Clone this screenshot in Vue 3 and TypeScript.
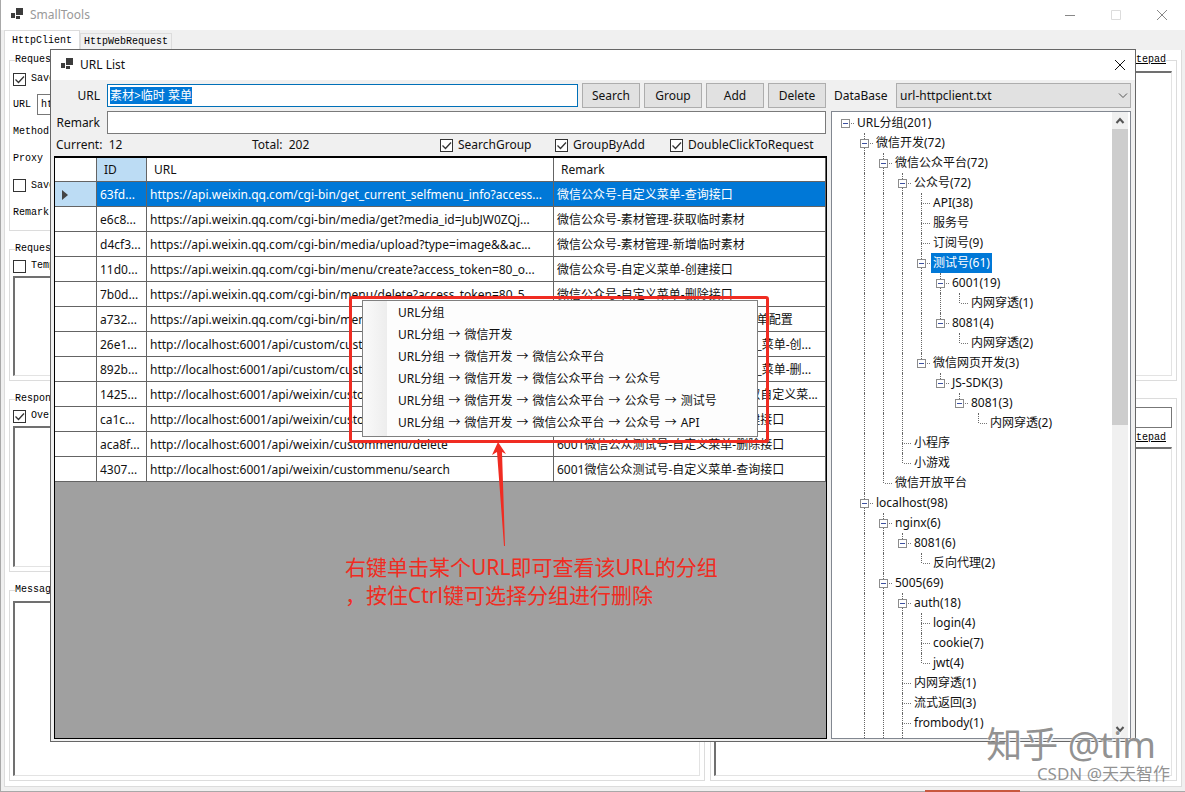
<script setup lang="ts">
import { ref } from 'vue'

interface UrlRow {
  id: string
  url: string
  remark: string
}

interface TreeNode {
  depth: number
  label: string
}

const rows: UrlRow[] = [
  { id: '63fd...', url: 'https://api.weixin.qq.com/cgi-bin/get_current_selfmenu_info?access...', remark: '微信公众号-自定义菜单-查询接口' },
  { id: 'e6c8...', url: 'https://api.weixin.qq.com/cgi-bin/media/get?media_id=JubJW0ZQj...', remark: '微信公众号-素材管理-获取临时素材' },
  { id: 'd4cf3...', url: 'https://api.weixin.qq.com/cgi-bin/media/upload?type=image&&ac...', remark: '微信公众号-素材管理-新增临时素材' },
  { id: '11d0...', url: 'https://api.weixin.qq.com/cgi-bin/menu/create?access_token=80_o...', remark: '微信公众号-自定义菜单-创建接口' },
  { id: '7b0d...', url: 'https://api.weixin.qq.com/cgi-bin/menu/delete?access_token=80_5...', remark: '微信公众号-自定义菜单-删除接口' },
  { id: 'a732...', url: 'https://api.weixin.qq.com/cgi-bin/menu', remark: '微信公众号-自定义菜单-获取自定义菜单配置' },
  { id: '26e1...', url: 'http://localhost:6001/api/custom/custom', remark: '6001微信公众测试号-通用接口自定义_菜单-创...' },
  { id: '892b...', url: 'http://localhost:6001/api/custom/custom', remark: '6001微信公众测试号-通用接口自定义_菜单-删...' },
  { id: '1425...', url: 'http://localhost:6001/api/weixin/custom', remark: '6001微信公众测试号-个性化菜单-获取自定义菜...' },
  { id: 'ca1c...', url: 'http://localhost:6001/api/weixin/custom', remark: '6001微信公众测试号-自定义菜单-创建接口' },
  { id: 'aca8f...', url: 'http://localhost:6001/api/weixin/custommenu/delete', remark: '6001微信公众测试号-自定义菜单-删除接口' },
  { id: '4307...', url: 'http://localhost:6001/api/weixin/custommenu/search', remark: '6001微信公众测试号-自定义菜单-查询接口' },
]

const nodes: TreeNode[] = [
  { depth: 0, label: 'URL分组(201)' },
  { depth: 1, label: '微信开发(72)' },
  { depth: 2, label: '微信公众平台(72)' },
  { depth: 3, label: '公众号(72)' },
  { depth: 4, label: 'API(38)' },
  { depth: 4, label: '服务号' },
  { depth: 4, label: '订阅号(9)' },
  { depth: 4, label: '测试号(61)' },
  { depth: 5, label: '6001(19)' },
  { depth: 6, label: '内网穿透(1)' },
  { depth: 5, label: '8081(4)' },
  { depth: 6, label: '内网穿透(2)' },
  { depth: 4, label: '微信网页开发(3)' },
  { depth: 5, label: 'JS-SDK(3)' },
  { depth: 6, label: '8081(3)' },
  { depth: 7, label: '内网穿透(2)' },
  { depth: 3, label: '小程序' },
  { depth: 3, label: '小游戏' },
  { depth: 2, label: '微信开放平台' },
  { depth: 1, label: 'localhost(98)' },
  { depth: 2, label: 'nginx(6)' },
  { depth: 3, label: '8081(6)' },
  { depth: 4, label: '反向代理(2)' },
  { depth: 2, label: '5005(69)' },
  { depth: 3, label: 'auth(18)' },
  { depth: 4, label: 'login(4)' },
  { depth: 4, label: 'cookie(7)' },
  { depth: 4, label: 'jwt(4)' },
  { depth: 3, label: '内网穿透(1)' },
  { depth: 3, label: '流式返回(3)' },
  { depth: 3, label: 'frombody(1)' },
]

// Levels whose branches carry on below the visible part of the list.
const openLevels = [1, 2, 3]

function continues(index: number, level: number): boolean {
  for (let j = index + 1; j < nodes.length; j++) {
    if (nodes[j].depth < level) return false
    if (nodes[j].depth === level) return true
  }
  return openLevels.includes(level)
}

const treeRows = nodes.map((node, i) => ({
  ...node,
  parent: i + 1 < nodes.length && nodes[i + 1].depth > node.depth,
  guides: Array.from({ length: node.depth }, (_, level) => continues(i, level)),
  more: continues(i, node.depth),
}))

const selectedNode = ref(7)
const selectedRow = ref(0)

const menuItems: string[][] = [
  ['URL分组'],
  ['URL分组', '微信开发'],
  ['URL分组', '微信开发', '微信公众平台'],
  ['URL分组', '微信开发', '微信公众平台', '公众号'],
  ['URL分组', '微信开发', '微信公众平台', '公众号', '测试号'],
  ['URL分组', '微信开发', '微信公众平台', '公众号', 'API'],
]

const buttons = ['Search', 'Group', 'Add', 'Delete']
const options = ref([
  { label: 'SearchGroup', on: true },
  { label: 'GroupByAdd', on: true },
  { label: 'DoubleClickToRequest', on: true },
])
const keyword = ref('素材>临时 菜单')
const remark = ref('')
</script>

<template>
  <div class="desktop">
    <main class="app-window">
      <header class="app-title">
        <svg class="logo" width="14" height="14" viewBox="0 0 14 14">
          <path d="M6 0h7v7H6zM1 5h4v5H1zM6 8h4v3H6z" fill="#3c3c3c" />
        </svg>
        <h1>SmallTools</h1>
        <div class="controls">
          <button type="button" aria-label="Minimize">
            <svg width="12" height="12"><path d="M1 6.500h10" stroke="#888" /></svg>
          </button>
          <button type="button" aria-label="Maximize">
            <svg width="12" height="12"><path d="M1.500 1.500h9v9h-9z" fill="none" stroke="#dcdcdc" /></svg>
          </button>
          <button type="button" aria-label="Close">
            <svg width="12" height="12"><path d="M1 1l10 10M11 1L1 11" stroke="#888" /></svg>
          </button>
        </div>
      </header>

      <nav class="tabs">
        <button type="button" class="tab active">HttpClient</button>
        <button type="button" class="tab">HttpWebRequest</button>
      </nav>

      <section class="page">
        <div class="column left">
          <fieldset class="g-request">
            <legend>Request</legend>
            <label class="line"><input type="checkbox" checked />Save</label>
            <label class="line">URL<input type="text" class="old-input" value="http" /></label>
            <div class="line">Method</div>
            <div class="line">Proxy</div>
            <label class="line"><input type="checkbox" />Save</label>
            <div class="line">Remark</div>
          </fieldset>
          <fieldset class="g-params">
            <legend>Request</legend>
            <label class="line"><input type="checkbox" />Template</label>
            <textarea aria-label="Request body"></textarea>
          </fieldset>
          <fieldset class="g-response">
            <legend>Response</legend>
            <label class="line"><input type="checkbox" checked />Overwrite</label>
            <textarea aria-label="Response body"></textarea>
          </fieldset>
          <fieldset class="g-message">
            <legend>Message</legend>
            <textarea aria-label="Messages"></textarea>
          </fieldset>
        </div>
        <div class="column right">
          <fieldset class="g-top">
            <legend class="end"><a href="#">Notepad</a></legend>
            <textarea aria-label="Headers"></textarea>
          </fieldset>
          <fieldset class="g-bottom">
            <input type="text" class="old-input" aria-label="Filter" />
            <a href="#">Notepad</a>
            <textarea aria-label="Output"></textarea>
          </fieldset>
        </div>
      </section>
      <div class="taskbar"><i></i></div>
    </main>

    <section class="dialog">
      <header class="dialog-title">
        <svg class="logo" width="14" height="14" viewBox="0 0 14 14">
          <path d="M6 0h7v7H6zM1 5h4v5H1zM6 8h4v3H6z" fill="#3c3c3c" />
        </svg>
        <h2>URL List</h2>
        <button type="button" aria-label="Close">
          <svg width="12" height="12"><path d="M1 1l10 10M11 1L1 11" stroke="#111" /></svg>
        </button>
      </header>

      <div class="dialog-body">
        <div class="main-pane">
          <div class="form-row">
            <label for="url">URL</label>
            <div class="field focused">
              <input id="url" v-model="keyword" type="text" class="keyword" />
            </div>
            <div class="buttons">
              <button v-for="b in buttons" :key="b" type="button">{{ b }}</button>
            </div>
          </div>
          <div class="form-row second">
            <label for="remark">Remark</label>
            <input id="remark" v-model="remark" class="field" type="text" />
          </div>
          <div class="status">
            <span class="current">Current:&nbsp; 12</span>
            <span class="total">Total:&nbsp; 202</span>
            <label v-for="o in options" :key="o.label"><input v-model="o.on" type="checkbox" />{{ o.label }}</label>
          </div>
          <div class="grid">
            <table>
              <colgroup><col class="c-head" /><col class="c-id" /><col class="c-url" /><col /></colgroup>
              <thead>
                <tr><th></th><th class="hot">ID</th><th>URL</th><th>Remark</th></tr>
              </thead>
              <tbody>
                <tr v-for="(r, i) in rows" :key="r.id" :class="{ selected: i === selectedRow }" @click="selectedRow = i">
                  <td class="row-head">
                    <svg v-if="i === selectedRow" width="6" height="10"><path d="M0 0l6 5-6 5z" fill="#444" /></svg>
                  </td>
                  <td>{{ r.id }}</td>
                  <td>{{ r.url }}</td>
                  <td>{{ r.remark }}</td>
                </tr>
              </tbody>
            </table>
          </div>
        </div>

        <aside class="side-pane">
          <div class="database">
            <label for="db">DataBase</label>
            <div class="select">
              <select id="db"><option>url-httpclient.txt</option></select>
              <svg width="10" height="6"><path d="M1 .5l4 4 4-4" fill="none" stroke="#555" /></svg>
            </div>
          </div>
          <div class="tree">
            <ul>
              <li v-for="(n, i) in treeRows" :key="i">
                <span v-for="(g, l) in n.guides" :key="l" class="cell" :class="{ through: g && l > 0 }"></span>
                <span class="cell own" :class="{ up: n.depth > 0, down: n.more && n.depth > 0 }">
                  <button v-if="n.parent" type="button" class="expander" aria-label="Toggle"></button>
                </span>
                <button type="button" class="node" :class="{ chosen: i === selectedNode }" @click="selectedNode = i">{{ n.label }}</button>
              </li>
              <li class="rest">
                <span class="cell"></span>
                <span v-for="l in openLevels" :key="l" class="cell through"></span>
              </li>
            </ul>
            <div class="scrollbar">
              <svg width="16" height="17"><path d="M4.500 11l3.500-4 3.500 4" fill="none" stroke="#555" stroke-width="2" /></svg>
              <div class="track"><div class="thumb"></div></div>
              <svg width="16" height="17"><path d="M4.500 6l3.500 4 3.500-4" fill="none" stroke="#555" stroke-width="2" /></svg>
            </div>
          </div>
        </aside>
      </div>

      <div class="context">
        <div class="context-menu" role="menu">
          <button v-for="(m, i) in menuItems" :key="i" type="button" role="menuitem">
            <template v-for="(part, k) in m" :key="k"><span v-if="k > 0" class="sep">→</span>{{ part }}</template>
          </button>
        </div>
      </div>
      <svg class="arrow" width="18" height="104" viewBox="0 0 18 104">
        <path d="M7 0L1 13l5-3 7 94 1-0L11 10l4 2z" fill="#f02c22" />
      </svg>
      <p class="note">右键单击某个URL即可查看该URL的分组<br />，按住Ctrl键可选择分组进行删除</p>
    </section>

    <div class="marks">
      <span class="mark-large">知乎 @tim</span>
      <span class="mark-small">CSDN @天天智作</span>
    </div>
  </div>
</template>

<style>
body {
  margin: 0;
  overflow: hidden;
}
</style>

<style scoped>
* {
  box-sizing: border-box;
}
.desktop {
  position: relative;
  height: 100vh;
  overflow: hidden;
  background: #f0f0f0;
  color: #111;
  font: 12px/20px "Noto Sans", "Noto Sans CJK SC", sans-serif;
}
button,
input,
select,
textarea {
  font: inherit;
  color: inherit;
  padding: 0;
  margin: 0;
  border-radius: 0;
}
button {
  border: 0;
  background: none;
}
h1,
h2 {
  margin: 0;
  font: inherit;
}
input[type="checkbox"] {
  appearance: none;
  width: 13px;
  height: 13px;
  margin: 0 5px 0 0;
  border: 1px solid #333;
  background: #fff;
  flex: none;
}
input[type="checkbox"]:checked {
  background: #fff url("data:image/svg+xml,%3Csvg xmlns='http://www.w3.org/2000/svg' viewBox='0 0 11 11'%3E%3Cpath d='M1.500 5.500l3 3 5.500-6' fill='none' stroke='%23333' stroke-width='1.300'/%3E%3C/svg%3E");
}

/* Main window */
.app-window {
  display: flex;
  flex-direction: column;
  height: 100%;
  border-left: 1px solid #a8a8a8;
}
.app-title {
  display: flex;
  align-items: center;
  height: 30px;
  flex: none;
  padding-left: 9px;
  background: #fff;
  color: #999;
}
.app-title h1 {
  flex: 1;
  margin-left: 6px;
}
.controls {
  display: flex;
}
.controls button {
  width: 46px;
  height: 28px;
  display: grid;
  place-items: center;
}
.tabs {
  display: flex;
  align-items: flex-end;
  height: 20px;
  flex: none;
  padding-left: 3px;
  font: 10px/16px "Liberation Mono", monospace;
  color: #000;
}
.tab {
  height: 17px;
  padding: 0 3px;
  border: 1px solid #dcdcdc;
  border-bottom: 0;
  background: #f0f0f0;
}
.tab.active {
  height: 20px;
  padding: 0 7px;
  background: #fff;
}
.page {
  flex: 1;
  min-height: 0;
  display: grid;
  grid-template-columns: 149fr 100fr;
  gap: 5px;
  margin: 0 3px;
  padding: 3px 4px 5px;
  border: 1px solid #dcdcdc;
  border-top: 0;
  background: #fff;
  font: 10px/14px "Liberation Mono", monospace;
  color: #000;
}
.column {
  display: flex;
  flex-direction: column;
  gap: 11px;
  min-height: 0;
}
fieldset {
  display: flex;
  flex-direction: column;
  margin: 0;
  min-width: 0;
  min-height: 0;
  padding: 0 4px 4px 3px;
  border: 1px solid #dcdcdc;
}
legend {
  margin-left: 2px;
  padding: 0;
  line-height: 14px;
}
legend.end {
  margin-left: auto;
  margin-right: 6px;
}
.g-request {
  flex: 0 0 178px;
}
.g-params {
  flex: 0 0 139px;
}
.g-response {
  flex: 0 0 180px;
}
.g-message {
  flex: 1;
}
.g-top {
  flex: 0 0 328px;
}
.g-bottom {
  flex: 1;
  margin-top: 6px;
  padding-top: 8px;
}
.line {
  display: flex;
  align-items: center;
  height: 27px;
  flex: none;
}
.g-request legend + .line {
  height: 24px;
}
.g-params .line,
.g-response .line {
  height: 20px;
}
.g-message legend,
.g-top legend {
  margin-bottom: 4px;
}
.line .old-input {
  margin-left: 6px;
  width: 200px;
}
.old-input {
  height: 21px;
  flex: none;
  padding: 0 3px;
  border: 1px solid #777;
  background: #fff;
}
.g-bottom a {
  align-self: flex-end;
  margin: 3px 6px 2px 0;
}
.page a {
  color: #000;
}
textarea {
  flex: 1;
  min-height: 0;
  width: 100%;
  resize: none;
  border: 1px solid #e3e3e3;
  border-top: 2px solid #707070;
  border-left: 2px solid #707070;
  background: #fff;
}
.taskbar {
  display: flex;
  height: 5px;
  flex: none;
  border-bottom: 1px solid #a8a8a8;
}
.taskbar i {
  width: 95px;
  height: 2px;
  margin: 3px 0 0 78%;
  background: #c8573e;
}

/* Dialog */
.dialog {
  position: absolute;
  inset: 49px 49px 50px 50px;
  display: flex;
  flex-direction: column;
  border: 1px solid #666;
  background: #f0f0f0;
}
.dialog-title {
  display: flex;
  align-items: center;
  height: 30px;
  flex: none;
  padding: 0 9px;
  background: #fff;
}
.dialog-title h2 {
  flex: 1;
  margin-left: 6px;
}
.dialog-title button {
  display: grid;
}
.dialog-body {
  flex: 1;
  min-height: 0;
  display: flex;
  gap: 4px;
  padding: 3px 4px 2px 3px;
}
.main-pane {
  flex: 1;
  min-width: 0;
  display: flex;
  flex-direction: column;
}
.form-row {
  display: flex;
  align-items: center;
  height: 25px;
  flex: none;
}
.form-row.second {
  margin: 2px 1px 0 0;
}
.form-row > label {
  width: 53px;
  padding-right: 7px;
  flex: none;
  text-align: right;
}
.field {
  flex: 1;
  min-width: 0;
  height: 23px;
  padding: 1px;
  border: 1px solid #7a7a7a;
  background: #fff;
}
.field.focused {
  display: flex;
  align-items: center;
  border-color: #0070b8;
}
.keyword {
  field-sizing: content;
  height: 17px;
  margin-left: 1px;
  border: 0;
  outline: 0;
  background: #0078d7;
  color: #fff;
  line-height: 17px;
}
.buttons {
  display: flex;
  gap: 4px;
  padding: 0 1px 0 4px;
}
.buttons button {
  width: 58px;
  height: 25px;
  border: 1px solid #adadad;
  background: #e1e1e1;
}
.status {
  display: flex;
  align-items: center;
  height: 20px;
  flex: none;
  padding: 0 7px 0 2px;
}
.status label {
  display: flex;
  align-items: center;
  width: 115px;
}
.status label:last-child {
  width: 150px;
}
.current {
  width: 196px;
}
.total {
  flex: 1;
}
.grid {
  flex: 1;
  min-height: 0;
  margin-top: 1px;
  overflow: hidden;
  border: 1px solid #000;
  border-top-width: 2px;
  background: #a0a0a0;
}
table {
  width: 100%;
  table-layout: fixed;
  border-collapse: separate;
  border-spacing: 0;
}
.c-head {
  width: 42px;
}
.c-id {
  width: 50px;
}
.c-url {
  width: 407px;
}
th,
td {
  height: 25px;
  padding: 2px 3px 0;
  border-right: 1px solid #646464;
  border-bottom: 1px solid #646464;
  background: #fff;
  font-weight: normal;
  text-align: left;
  white-space: nowrap;
  overflow: hidden;
}
th {
  height: 24px;
  padding: 0 7px;
}
th.hot {
  background: #bcdcf4;
}
.selected td {
  background: #0078d7;
  color: #fff;
}
.selected .row-head {
  background: #bcdcf4;
}
.row-head {
  padding: 2px 7px 0;
}
.row-head svg {
  display: block;
}

/* Tree */
.side-pane {
  width: 300px;
  flex: none;
  display: flex;
  flex-direction: column;
}
.database {
  display: flex;
  align-items: center;
  height: 25px;
  flex: none;
  padding-left: 3px;
}
.database label {
  width: 62px;
}
.select {
  position: relative;
  flex: 1;
}
.select select {
  display: block;
  appearance: none;
  width: 100%;
  height: 25px;
  padding: 0 3px;
  border: 1px solid #adadad;
  background: #e1e1e1;
}
.select svg {
  position: absolute;
  right: 3px;
  top: 10px;
}
.tree {
  flex: 1;
  min-height: 0;
  display: flex;
  margin-top: 3px;
  padding-right: 2px;
  border: 1px solid #828790;
  background: #fff;
}
ul {
  flex: 1;
  min-width: 0;
  display: flex;
  flex-direction: column;
  margin: 0;
  padding: 1px 0 0 4px;
  list-style: none;
  overflow: hidden;
}
li {
  display: flex;
  height: 20px;
  flex: none;
}
li.rest {
  flex: 1;
  height: auto;
  min-height: 0;
}
.cell {
  position: relative;
  width: 19px;
  flex: none;
}
.cell.through::before,
.cell.up::before,
.cell.down::after {
  content: "";
  position: absolute;
  left: 9px;
  top: 0;
  height: 100%;
  border-left: 1px dotted #666;
}
.cell.up::before {
  height: 50%;
}
.cell.down::after {
  top: 50%;
  height: 50%;
}
.cell.own {
  background: linear-gradient(90deg, transparent 50%, #777 50%) 10px 10px / 2px 1px repeat-x;
  background-clip: content-box;
  padding-left: 10px;
}
.expander {
  position: absolute;
  left: 5px;
  top: 6px;
  z-index: 1;
  width: 9px;
  height: 9px;
  border: 1px solid #8c8c8c;
  background: linear-gradient(#3c50a0, #3c50a0) center / 5px 1px no-repeat #fff;
}
.node {
  padding: 0 2px;
  white-space: nowrap;
}
.node.chosen {
  background: #0078d7;
  color: #fff;
}
.scrollbar {
  width: 16px;
  flex: none;
  display: flex;
  flex-direction: column;
  background: #f0f0f0;
}
.track {
  flex: 1;
}
.thumb {
  height: 50%;
  background: #cdcdcd;
}

/* Context menu and its highlight */
.context {
  position: absolute;
  left: 298px;
  top: 246px;
  padding: 1px 8px 3px 10px;
  border: 3px solid #f02c22;
  border-radius: 3px;
}
.context-menu {
  display: flex;
  flex-direction: column;
  width: 396px;
  padding: 1px 0 2px;
  border: 1px solid #808080;
  background: linear-gradient(90deg, #fafafa, #ededed 24px, #fdfdfd 24px);
}
.context-menu button {
  height: 22px;
  padding-left: 35px;
  text-align: left;
  white-space: nowrap;
}
.sep {
  padding: 0 4px;
}
.arrow {
  position: absolute;
  left: 440px;
  top: 392px;
}
.note {
  position: absolute;
  left: 294px;
  top: 503px;
  margin: 0;
  color: #f02c22;
  font-size: 21px;
  line-height: 28px;
  white-space: nowrap;
}

/* Watermarks */
.marks {
  position: absolute;
  right: 15px;
  bottom: 7px;
  display: flex;
  flex-direction: column;
  align-items: flex-end;
  color: rgba(110, 110, 110, 0.75);
  pointer-events: none;
  white-space: nowrap;
}
.mark-large {
  margin-right: 14px;
  font-size: 36px;
  line-height: 36px;
  text-shadow: 0 0 1px #fff, 1px 1px 1px #fff;
}
.mark-small {
  font-size: 17px;
  line-height: 22px;
}
</style>
